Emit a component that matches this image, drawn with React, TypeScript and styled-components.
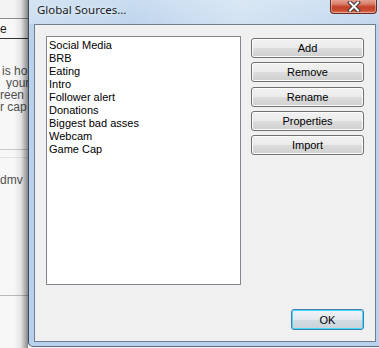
import React from "react";
import styled, { createGlobalStyle } from "styled-components";

const Global = createGlobalStyle`
  html, body { margin: 0; padding: 0; }
  body { width: 379px; height: 348px; overflow: hidden; background: #f7f7f7; }
  * { box-sizing: border-box; }
`;

const Page = styled.div`
  display: flex;
  width: 379px;
  height: 348px;
  font-family: "Liberation Sans", Arial, sans-serif;
`;

const BackWindow = styled.div`
  position: relative;
  width: 28px;
  flex: none;
  display: flex;
  flex-direction: column;
  background: #f7f7f7;
  overflow: hidden;
  &::after {
    content: "";
    position: absolute;
    top: 0;
    bottom: 0;
    right: 0;
    width: 14px;
    background: linear-gradient(to right, rgba(0,0,0,0), rgba(0,0,0,0.08) 50%, rgba(0,0,0,0.45));
  }
`;

const BackHeader = styled.div<{ $h: number; $line: string; $bg?: string }>`
  height: ${(p) => p.$h}px;
  flex: none;
  border-bottom: 1px solid ${(p) => p.$line};
  background: ${(p) => p.$bg || "transparent"};
  font-size: 12px;
  line-height: ${(p) => p.$h}px;
  color: #1a1a1a;
  white-space: nowrap;
`;

const BackText = styled.div`
  padding-top: 26px;
  height: 111px;
  flex: none;
  font-size: 12px;
  line-height: 12px;
  color: #505050;
  white-space: nowrap;
  border-bottom: 1px solid #c8c8c8;
`;

const BackLine = styled.div<{ $x: number }>`
  padding-left: ${(p) => p.$x}px;
  height: 12px;
  overflow: hidden;
`;

const BackGap = styled.div`
  height: 8px;
  flex: none;
  border-bottom: 1px solid #e2e2e2;
`;

const BackItem = styled.div`
  height: 138px;
  flex: none;
  padding-top: 15px;
  font-size: 12px;
  color: #505050;
  white-space: nowrap;
  border-bottom: 1px solid #b8b8b8;
`;

const Dialog = styled.div`
  flex: 1;
  height: 347px;
  display: flex;
  flex-direction: column;
  border-left: 1px solid #3a4a5a;
  border-bottom: 1px solid #5a6b7c;
  border-bottom-left-radius: 5px;
  background: linear-gradient(to bottom, #c6dbef 0px, #bcd3ec 24px, #b9d2ee 60px, #b7d1ee 100%);
  padding: 0 0 4px 5px;
`;

const TitleBar = styled.div`
  height: 24px;
  flex: none;
  display: flex;
  align-items: flex-start;
  justify-content: space-between;
  background: linear-gradient(to right, rgba(255,255,255,0.25), rgba(255,255,255,0.05) 30%, rgba(255,255,255,0.35) 60%, rgba(255,255,255,0.1));
  margin-left: -5px;
  padding-left: 8px;
`;

const Title = styled.div`
  font-family: "Noto Sans", "Open Sans", sans-serif;
  font-size: 11.5px;
  line-height: 20px;
  color: #1b1b1b;
  text-shadow: 0 0 6px rgba(255,255,255,0.9);
`;

const CloseButton = styled.div`
  width: 47px;
  height: 15px;
  margin-right: 2px;
  margin-top: -1px;
  border: 1px solid #6b2b22;
  border-top: none;
  border-radius: 0 0 4px 4px;
  background: linear-gradient(to bottom, #e9a797 0%, #d9806c 35%, #c5442c 55%, #c84a30 80%, #dd7a5e 100%);
  box-shadow: inset 0 0 0 1px rgba(255,220,210,0.45);
  display: flex;
  align-items: center;
  justify-content: center;
`;

const Client = styled.div`
  flex: 1;
  display: flex;
  flex-direction: column;
  background: #f0f0f0;
  border: 1px solid #6f7d8c;
  margin-right: 3px;
  padding: 11px 10px 11px 11px;
`;

const TopRow = styled.div`
  display: flex;
  gap: 10px;
`;

const ListBox = styled.div`
  width: 195px;
  height: 249px;
  flex: none;
  background: #ffffff;
  border: 1px solid #828790;
  padding: 2px 2px;
`;

const ListItem = styled.div`
  font-size: 11px;
  line-height: 13px;
  height: 13px;
  color: #000;
  white-space: nowrap;
`;

const ButtonColumn = styled.div`
  width: 113px;
  display: flex;
  flex-direction: column;
  gap: 4.35px;
  padding-top: 2px;
`;

const Btn = styled.div<{ $default?: boolean }>`
  height: 20px;
  flex: none;
  display: flex;
  align-items: center;
  justify-content: center;
  font-size: 11px;
  color: #000;
  border: 1px solid ${(p) => (p.$default ? "#3c7fb1" : "#707070")};
  border-radius: 3px;
  background: linear-gradient(to bottom, #f2f2f2 0%, #ebebeb 50%, #dddddd 50%, #cfcfcf 100%);
  box-shadow: inset 0 0 0 1px ${(p) => (p.$default ? "#48d8fb" : "#fcfcfc")};
`;

const Footer = styled.div`
  flex: 1;
  display: flex;
  align-items: flex-end;
  justify-content: flex-end;
  padding-right: 1px;
`;

const OkBtn = styled(Btn)`
  width: 73px;
  height: 21px;
  background: linear-gradient(to bottom, #eef3f7 0%, #e3e9ee 50%, #d3dce3 50%, #cbd3da 100%);
`;

const items = [
  "Social Media",
  "BRB",
  "Eating",
  "Intro",
  "Follower alert",
  "Donations",
  "Biggest bad asses",
  "Webcam",
  "Game Cap",
];

const buttons = ["Add", "Remove", "Rename", "Properties", "Import"];

export default function App() {
  return (
    <>
      <Global />
      <Page>
        <BackWindow>
          <BackHeader $h={19} $line="#8c8c8c" $bg="#f3f3f3" />
          <BackHeader $h={20} $line="#333333">e</BackHeader>
          <BackText>
            <BackLine $x={2}>is ho</BackLine>
            <BackLine $x={6}>your</BackLine>
            <BackLine $x={0}>reen s</BackLine>
            <BackLine $x={0}>r cap</BackLine>
          </BackText>
          <BackGap />
          <BackItem>dmv</BackItem>
        </BackWindow>
        <Dialog>
          <TitleBar>
            <Title>Global Sources...</Title>
            <CloseButton>
              <svg width="14" height="11" viewBox="0 0 14 11">
                <path d="M3 1.5 L11 9.5 M11 1.5 L3 9.5" stroke="#3a3a3a" strokeWidth="4" strokeLinecap="square" fill="none" />
                <path d="M3 1.5 L11 9.5 M11 1.5 L3 9.5" stroke="#ffffff" strokeWidth="2" strokeLinecap="square" fill="none" />
              </svg>
            </CloseButton>
          </TitleBar>
          <Client>
            <TopRow>
              <ListBox>
                {items.map((t) => (
                  <ListItem key={t}>{t}</ListItem>
                ))}
              </ListBox>
              <ButtonColumn>
                {buttons.map((b) => (
                  <Btn key={b}>{b}</Btn>
                ))}
              </ButtonColumn>
            </TopRow>
            <Footer>
              <OkBtn $default>OK</OkBtn>
            </Footer>
          </Client>
        </Dialog>
      </Page>
    </>
  );
}
